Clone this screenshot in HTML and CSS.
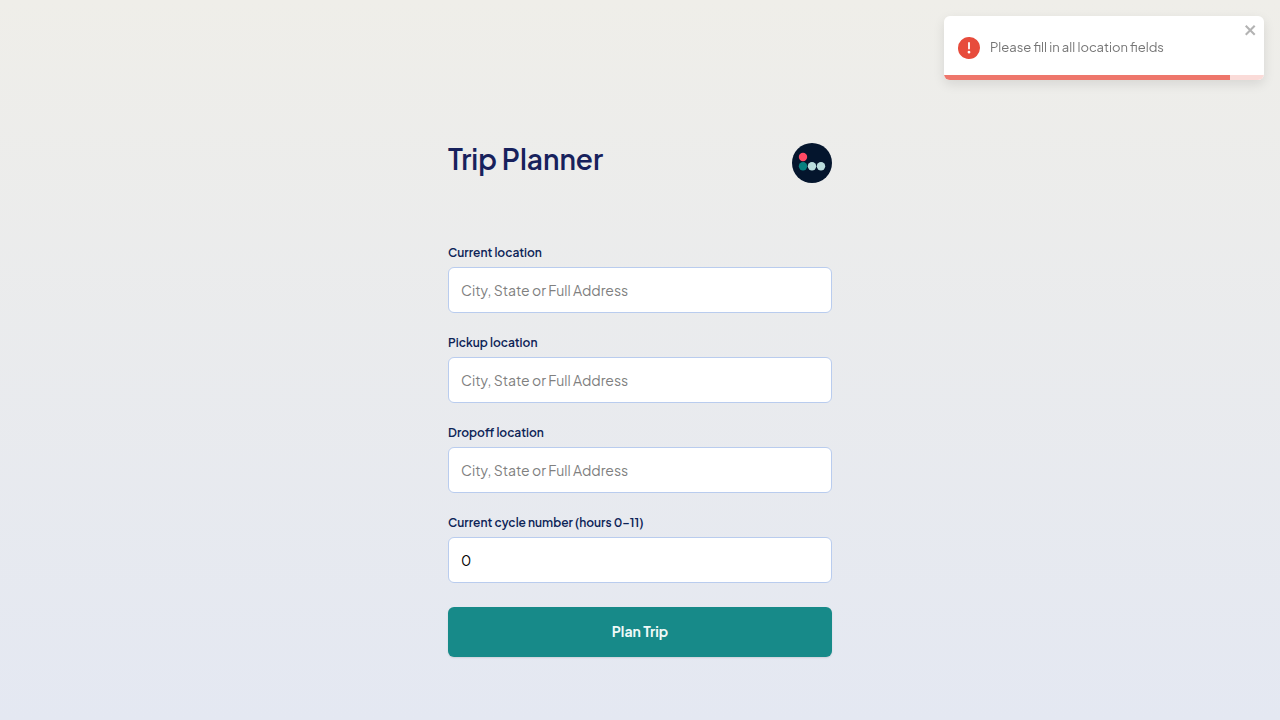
FILE: index.html
```html
<!DOCTYPE html>
<html lang="en">
<head>
<meta charset="utf-8">
<meta name="viewport" content="width=device-width, initial-scale=1">
<title>Trip Planner</title>
<link rel="stylesheet" href="styles.css">
</head>
<body>
<main class="page">
  <form class="planner" novalidate>
    <header class="header">
      <h1 class="title">Trip Planner</h1>
      <svg class="logo" viewBox="0 0 40 40" aria-hidden="true">
        <circle cx="20" cy="20" r="20" fill="#04152d"/>
        <circle cx="11" cy="14" r="4.2" fill="#ff4964"/>
        <circle cx="11" cy="23.200" r="4.200" fill="#08807f"/>
        <circle cx="20" cy="23.200" r="4.200" fill="#b9dcdc"/>
        <circle cx="29" cy="23.200" r="4.200" fill="#b9dcdc"/>
      </svg>
    </header>
    <div class="fields">
      <div class="field">
        <label class="label" for="current">Current location</label>
        <input class="input" id="current" type="text" placeholder="City, State or Full Address">
      </div>
      <div class="field">
        <label class="label" for="pickup">Pickup location</label>
        <input class="input" id="pickup" type="text" placeholder="City, State or Full Address">
      </div>
      <div class="field">
        <label class="label" for="dropoff">Dropoff location</label>
        <input class="input" id="dropoff" type="text" placeholder="City, State or Full Address">
      </div>
      <div class="field">
        <label class="label" for="cycle">Current cycle number (hours 0–11)</label>
        <input class="input" id="cycle" type="number" min="0" max="11" value="0">
      </div>
      <button class="submit" type="submit">Plan Trip</button>
    </div>
  </form>
</main>
<div class="toast" role="alert">
  <svg class="toast-icon" viewBox="0 0 24 24" aria-hidden="true">
    <path fill="#e74c3c" d="M11.983 0a12.206 12.206 0 00-8.510 3.653A11.800 11.800 0 000 12.207 11.779 11.779 0 0011.800 24h.214A12.111 12.111 0 0024 11.791 11.766 11.766 0 0011.983 0zM10.500 16.542a1.476 1.476 0 011.449-1.530h.027a1.527 1.527 0 011.523 1.470 1.475 1.475 0 01-1.449 1.530h-.027a1.529 1.529 0 01-1.523-1.470zM11 12.500v-6a1 1 0 012 0v6a1 1 0 11-2 0z"/>
  </svg>
  <span class="toast-text">Please fill in all location fields</span>
  <button class="toast-close" type="button" aria-label="Close">
    <svg class="close-icon" viewBox="0 0 14 16" aria-hidden="true">
      <path fill="currentColor" fill-rule="evenodd" d="M7.710 8.230l3.750 3.750-1.480 1.480-3.750-3.750-3.750 3.750L1 11.980l3.750-3.750L1 4.480 2.480 3l3.750 3.750L9.980 3l1.480 1.480-3.750 3.750z"/>
    </svg>
  </button>
  <div class="progress"><div class="progress-bar"></div></div>
</div>
</body>
</html>
```
FILE: styles.css
```css
* {
  box-sizing: border-box;
}

body {
  margin: 0;
  font-family: "Plus Jakarta Sans", Inter, "Liberation Sans", sans-serif;
}

.page {
  display: flex;
  justify-content: center;
  min-height: 100vh;
  padding: 143px 16px 48px;
  background: linear-gradient(#efeee9, #e4e8f2);
}

.planner {
  width: 100%;
  max-width: 384px;
}

.header {
  display: flex;
  align-items: flex-start;
  justify-content: space-between;
  margin-bottom: 64px;
}

.title {
  margin: 0;
  color: #17215c;
  font-size: 28px;
  font-weight: 600;
  line-height: 32px;
}

.logo {
  width: 40px;
  height: 40px;
}

.fields {
  display: flex;
  flex-direction: column;
  gap: 24px;
}

.field {
  display: flex;
  flex-direction: column;
  gap: 8px;
}

.label {
  color: #0d2457;
  font-size: 12px;
  font-weight: 600;
  line-height: 12px;
}

.input {
  width: 100%;
  height: 46px;
  padding: 0 12px;
  border: 1px solid #b9ccee;
  border-radius: 6px;
  background: #fff;
  color: #000;
  font-family: inherit;
  font-size: 14px;
  appearance: textfield;
}

.input::placeholder {
  color: #808080;
}

.submit {
  height: 50px;
  padding: 0 16px 2px;
  border: 0;
  border-radius: 6px;
  background: #178a89;
  box-shadow: 0 1px 2px rgba(0, 0, 0, 0.1);
  color: #eff9f8;
  font-family: inherit;
  font-size: 14px;
  font-weight: 700;
}

.toast {
  position: fixed;
  top: 16px;
  right: 16px;
  display: flex;
  align-items: center;
  gap: 10px;
  width: 320px;
  height: 64px;
  padding: 14px;
  overflow: hidden;
  border-radius: 6px;
  background: #fff;
  box-shadow: 0 4px 12px rgba(0, 0, 0, 0.1);
  color: #757575;
}

.toast-icon {
  width: 22px;
  height: 22px;
}

.toast-text {
  padding-bottom: 2px;
  font-size: 13px;
  line-height: 20px;
}

.toast-close {
  position: absolute;
  top: 6px;
  right: 6px;
  width: 14px;
  height: 16px;
  padding: 0;
  border: 0;
  background: transparent;
  color: #b3b3b3;
}

.close-icon {
  display: block;
  width: 14px;
  height: 16px;
}

.progress {
  position: absolute;
  right: 0;
  bottom: 0;
  left: 0;
  height: 5px;
  background: #fadbd8;
}

.progress-bar {
  width: 89.4%;
  height: 100%;
  background: #ee766b;
}
```
